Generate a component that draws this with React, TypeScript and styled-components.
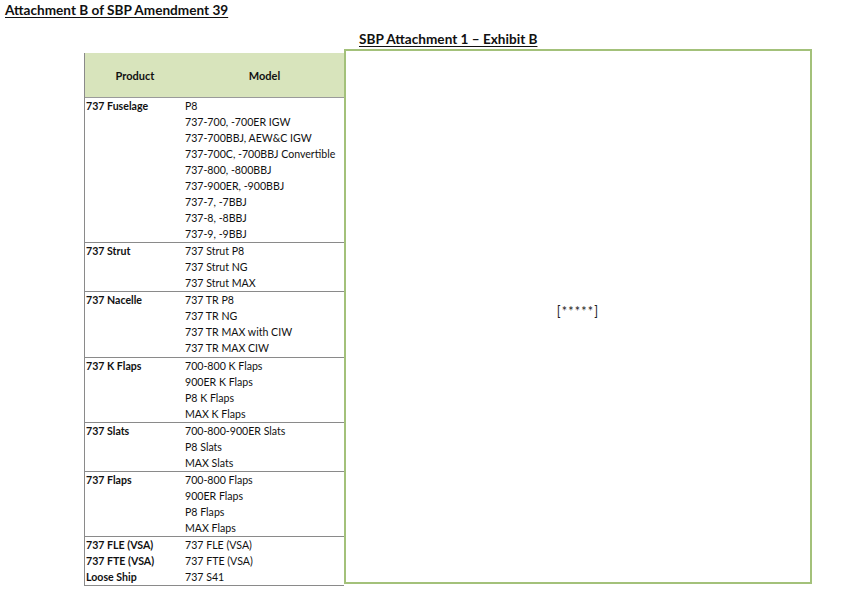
import React from "react";
import styled, { createGlobalStyle } from "styled-components";

const Global = createGlobalStyle`
  html, body { margin: 0; padding: 0; background: #fff; }
  body { font-family: Lato, "Open Sans", "Liberation Sans", sans-serif; color: #111; }
`;

const Page = styled.div`
  width: 851px;
  height: 599px;
  padding: 2px 0 0 5px;
  box-sizing: border-box;
`;

const Title = styled.div`
  font-weight: 700;
  font-size: 13.6px;
  line-height: 17px;
  text-decoration: underline;
  text-underline-offset: 2px;
`;

const SubTitle = styled.div`
  margin: 12px 0 0 354px;
  font-weight: 700;
  font-size: 13.6px;
  line-height: 16px;
  text-decoration: underline;
  text-underline-offset: 2px;
`;

const Main = styled.div`
  display: flex;
  align-items: flex-start;
  margin: 2px 0 0 79px;
`;

const Table = styled.div`
  width: 260px;
  margin-top: 4px;
  border-left: 1px solid #8a8a8a;
  box-sizing: border-box;
  font-size: 10.6px;
`;

const Header = styled.div`
  display: grid;
  grid-template-columns: 100px 1fr;
  height: 44px;
  align-items: center;
  background: #d8e4bc;
  border-bottom: 1px solid #9a9a9a;
  font-weight: 700;
  font-size: 11px;
  text-align: center;
`;

const Group = styled.div`
  display: grid;
  grid-template-columns: 100px 1fr;
  border-bottom: 1px solid #8a8a8a;
`;

const ProductCell = styled.div`
  padding-left: 1px;
  font-weight: 700;
  line-height: 16.03px;
`;

const ModelCell = styled.div`
  display: flex;
  flex-direction: column;
  line-height: 16.03px;
`;

const Box = styled.div`
  width: 468px;
  height: 535px;
  border: 2px solid #a3c17a;
  box-sizing: border-box;
  display: flex;
  align-items: center;
  justify-content: center;
  padding-bottom: 10px;
  font-size: 12.5px;
  letter-spacing: 1.2px;
  color: #222;
`;

type Row = { products: string[]; models: string[] };

const groups: Row[] = [
  {
    products: ["737 Fuselage"],
    models: [
      "P8",
      "737-700, -700ER IGW",
      "737-700BBJ, AEW&C IGW",
      "737-700C, -700BBJ Convertible",
      "737-800, -800BBJ",
      "737-900ER, -900BBJ",
      "737-7, -7BBJ",
      "737-8, -8BBJ",
      "737-9, -9BBJ",
    ],
  },
  { products: ["737 Strut"], models: ["737 Strut P8", "737 Strut NG", "737 Strut MAX"] },
  {
    products: ["737 Nacelle"],
    models: ["737 TR P8", "737 TR NG", "737 TR MAX with CIW", "737 TR MAX CIW"],
  },
  {
    products: ["737 K Flaps"],
    models: ["700-800 K Flaps", "900ER K Flaps", "P8 K Flaps", "MAX K Flaps"],
  },
  { products: ["737 Slats"], models: ["700-800-900ER Slats", "P8 Slats", "MAX Slats"] },
  {
    products: ["737 Flaps"],
    models: ["700-800 Flaps", "900ER Flaps", "P8 Flaps", "MAX Flaps"],
  },
  {
    products: ["737 FLE (VSA)", "737 FTE (VSA)", "Loose Ship"],
    models: ["737 FLE (VSA)", "737 FTE (VSA)", "737 S41"],
  },
];

export default function App() {
  return (
    <Page>
      <Global />
      <Title>Attachment B of SBP Amendment 39</Title>
      <SubTitle>SBP Attachment 1 – Exhibit B</SubTitle>
      <Main>
        <Table>
          <Header>
            <div>Product</div>
            <div>Model</div>
          </Header>
          {groups.map((g, i) => (
            <Group key={i}>
              <ProductCell>
                {g.products.map((p) => (
                  <div key={p}>{p}</div>
                ))}
              </ProductCell>
              <ModelCell>
                {g.models.map((m) => (
                  <span key={m}>{m}</span>
                ))}
              </ModelCell>
            </Group>
          ))}
        </Table>
        <Box>[*****]</Box>
      </Main>
    </Page>
  );
}
